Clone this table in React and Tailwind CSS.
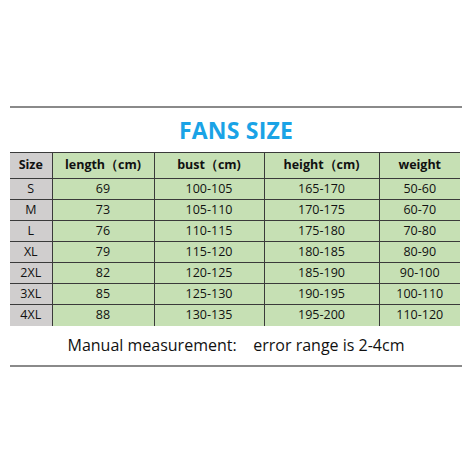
import React from "react";

const rows = [
  ["S", "69", "100-105", "165-170", "50-60"],
  ["M", "73", "105-110", "170-175", "60-70"],
  ["L", "76", "110-115", "175-180", "70-80"],
  ["XL", "79", "115-120", "180-185", "80-90"],
  ["2XL", "82", "120-125", "185-190", "90-100"],
  ["3XL", "85", "125-130", "190-195", "100-110"],
  ["4XL", "88", "130-135", "195-200", "110-120"],
];

export default function App() {
  return (
    <div
      className="w-[472px] h-[472px] bg-white text-[#111]"
      style={{ fontFamily: '"Open Sans", "Noto Sans", sans-serif' }}
    >
      <div className="pt-[106px] px-[10px]">
        <div className="h-[2px] bg-[#8a8a8a]" />
        <div className="h-[44px] flex items-center justify-center">
          <span className="text-[23px] font-bold text-[#1aa3e6] leading-none tracking-[0.2px]">
            FANS SIZE
          </span>
        </div>
        <table className="border-collapse table-fixed w-[450px] text-[12.5px]">
          <colgroup>
            <col className="w-[42px]" />
            <col className="w-[102px]" />
            <col className="w-[110px]" />
            <col className="w-[115px]" />
            <col className="w-[81px]" />
          </colgroup>
          <thead>
            <tr className="h-[26px]">
              <th className="bg-[#d0cece] border border-[#3a3a3a] border-l-0 font-bold">Size</th>
              <th className="bg-[#c6e0b4] border border-[#3a3a3a] font-bold">length（cm)</th>
              <th className="bg-[#c6e0b4] border border-[#3a3a3a] font-bold">bust（cm)</th>
              <th className="bg-[#c6e0b4] border border-[#3a3a3a] font-bold">height（cm)</th>
              <th className="bg-[#c6e0b4] border border-[#3a3a3a] border-r-0 font-bold">weight</th>
            </tr>
          </thead>
          <tbody>
            {rows.map((r, i) => (
              <tr key={i} className="h-[21px]">
                {r.map((c, j) => (
                  <td
                    key={j}
                    className={
                      "text-center border border-[#3a3a3a] leading-none p-0 " +
                      (j === 0 ? "bg-[#d0cece] border-l-0 " : "bg-[#c6e0b4] ") +
                      (j === 4 ? "border-r-0 " : "") +
                      (i === rows.length - 1 ? "border-b-0" : "")
                    }
                  >
                    {c}
                  </td>
                ))}
              </tr>
            ))}
          </tbody>
        </table>
        <div className="h-[39px] flex items-center justify-center">
          <span className="text-[16px] leading-none whitespace-pre">Manual measurement:    error range is 2-4cm</span>
        </div>
        <div className="h-[2px] bg-[#8a8a8a]" />
      </div>
    </div>
  );
}
